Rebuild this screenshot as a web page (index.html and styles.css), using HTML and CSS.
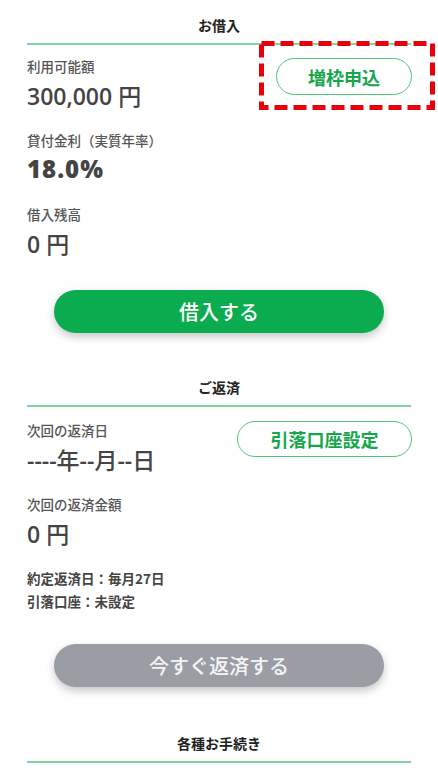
FILE: index.html
```html
<!DOCTYPE html>
<html lang="ja">
<head>
    <meta charset="UTF-8">
    <meta name="viewport" content="width=device-width, initial-scale=1.0">
    <title>マイページ</title>
    <link rel="stylesheet" href="styles.css">
</head>
<body>
    <div class="page">
        <section class="block borrow">
            <h2 class="block-title">お借入</h2>
            <div class="row">
                <div class="items">
                    <div class="item">
                        <div class="label">利用可能額</div>
                        <div class="value">300,000 <span class="unit">円</span></div>
                    </div>
                    <div class="item">
                        <div class="label">貸付金利（実質年率）</div>
                        <div class="value strong">18.0%</div>
                    </div>
                    <div class="item">
                        <div class="label">借入残高</div>
                        <div class="value">0 <span class="unit">円</span></div>
                    </div>
                </div>
                <div class="pill-wrap">
                    <button class="pill">増枠申込</button>
                    <svg class="mark" width="176" height="69" viewBox="0 0 176 69">
                        <rect x="2.5" y="2.5" width="171" height="64" fill="none" stroke="#e8000b" stroke-width="5" stroke-dasharray="13 6"/>
                    </svg>
                </div>
            </div>
            <button class="main-btn">借入する</button>
        </section>

        <section class="block repay">
            <h2 class="block-title">ご返済</h2>
            <div class="row">
                <div class="items">
                    <div class="item">
                        <div class="label">次回の返済日</div>
                        <div class="value">----<span class="unit">年</span>--<span class="unit">月</span>--<span class="unit">日</span></div>
                    </div>
                    <div class="item">
                        <div class="label">次回の返済金額</div>
                        <div class="value">0 <span class="unit">円</span></div>
                    </div>
                </div>
                <div class="pill-wrap">
                    <button class="pill wide">引落口座設定</button>
                </div>
            </div>
            <div class="notes">
                <p>約定返済日：毎月27日</p>
                <p>引落口座：未設定</p>
            </div>
            <button class="main-btn disabled">今すぐ返済する</button>
        </section>

        <section class="block misc">
            <h2 class="block-title">各種お手続き</h2>
        </section>
    </div>
</body>
</html>
```

FILE: styles.css
```css
body {
    margin: 0;
    background-color: #FFFFFF;
    color: #444444;
    font-family: "Noto Sans CJK JP", "Noto Sans", sans-serif;
}
.page {
    padding: 0 27px;
}
.block-title {
    margin: 0;
    padding: 16px 0 8px;
    font-size: 14px;
    line-height: 19px;
    font-weight: 700;
    color: #222222;
    text-align: center;
    border-bottom: 2px solid #7fd6a2;
}
.row {
    display: flex;
    justify-content: space-between;
    align-items: flex-start;
}
.borrow .row {
    padding-top: 12px;
}
.repay .row {
    padding-top: 14px;
}
.item + .item {
    margin-top: 21px;
}
.label {
    font-size: 13.5px;
    line-height: 18px;
    font-weight: 500;
    color: #555555;
}
.value {
    height: 30px;
    margin-top: 5px;
    font-family: "Open Sans", "Noto Sans CJK JP", sans-serif;
    font-size: 23px;
    line-height: 30px;
    font-weight: 600;
    color: #444444;
}
.value .unit {
    font-family: "Noto Sans CJK JP", sans-serif;
    font-weight: 500;
}
.value.strong {
    font-size: 24px;
    font-weight: 800;
    letter-spacing: 1px;
}
.pill-wrap {
    position: relative;
    margin-top: 1px;
    margin-right: -1px;
}
.pill {
    display: block;
    width: 136px;
    height: 37px;
    padding: 0;
    background-color: #FFFFFF;
    border: 1.5px solid #4cc877;
    border-radius: 19px;
    color: #16a64c;
    font-family: inherit;
    font-size: 18px;
    font-weight: 700;
}
.pill.wide {
    width: 175px;
    height: 36px;
    margin-top: -1px;
}
.mark {
    position: absolute;
    left: -17px;
    top: -17px;
}
.main-btn {
    display: block;
    width: 330px;
    height: 43px;
    margin: 32px auto 0;
    border: none;
    border-radius: 22px;
    background-color: #0bab4f;
    color: #FFFFFF;
    font-family: inherit;
    font-size: 20px;
    font-weight: 500;
    box-shadow: 0 4px 8px rgba(0, 0, 0, 0.22);
}
.main-btn.disabled {
    margin-top: 31px;
    background-color: #9b9da4;
    color: #f4f4f4;
}
.repay {
    margin-top: 29px;
}
.notes {
    margin-top: 19px;
}
.notes p {
    margin: 0;
    font-size: 13.5px;
    line-height: 23px;
    font-weight: 700;
    color: #444444;
}
.misc {
    margin-top: 31px;
}
```
